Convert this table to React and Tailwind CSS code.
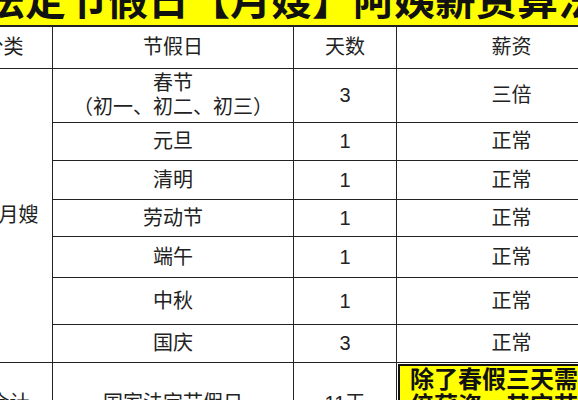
import React from "react";

const rows = [
  { name: "元旦", days: "1", pay: "正常", h: "h-[38px]" },
  { name: "清明", days: "1", pay: "正常", h: "h-[39px]" },
  { name: "劳动节", days: "1", pay: "正常", h: "h-[37px]" },
  { name: "端午", days: "1", pay: "正常", h: "h-[41px]" },
  { name: "中秋", days: "1", pay: "正常", h: "h-[47px]" },
  { name: "国庆", days: "3", pay: "正常", h: "h-[38px]" },
];

const cell = "border border-[#222] text-center align-middle p-0";

export default function App() {
  return (
    <div className="w-[578px] h-[400px] overflow-hidden bg-white text-[#222] font-['Liberation_Sans','Noto_Sans_CJK_SC',sans-serif]">
      {/* title band */}
      <div className="h-[27px] bg-[#ffff00] border-b-2 border-[#222] overflow-hidden">
        <div className="ml-[-16px] mt-[-19px] whitespace-nowrap text-[41px] leading-[41px] font-bold text-[#111]">
          法定节假日【月嫂】阿姨薪资算法
        </div>
      </div>

      <table className="table-fixed border-collapse ml-[-28px] w-[654px] text-[20px] leading-[24px]">
        <colgroup>
          <col className="w-[80px]" />
          <col className="w-[241px]" />
          <col className="w-[103px]" />
          <col className="w-[230px]" />
        </colgroup>
        <tbody>
          <tr className="h-[41px]">
            <td className={cell + " border-t-0 pr-[18px]"}>分类</td>
            <td className={cell + " border-t-0"}>节假日</td>
            <td className={cell + " border-t-0"}>天数</td>
            <td className={cell + " border-t-0"}>薪资</td>
          </tr>
          <tr className="h-[54px]">
            <td className={cell + " pr-[8px]"} rowSpan={7}>
              阿月嫂
            </td>
            <td className={cell}>
              <div>春节</div>
              <div>（初一、初二、初三）</div>
            </td>
            <td className={cell}>3</td>
            <td className={cell}>三倍</td>
          </tr>
          {rows.map((r) => (
            <tr key={r.name} className={r.h}>
              <td className={cell}>{r.name}</td>
              <td className={cell}>{r.days}</td>
              <td className={cell}>{r.pay}</td>
            </tr>
          ))}
          <tr className="h-[80px]">
            <td className={cell + " pr-[6px]"}>合计</td>
            <td className={cell}>国家法定节假日</td>
            <td className={cell}>11天</td>
            <td className="border border-[#222] p-0 align-top">
              <div className="h-[80px] mt-[1px] ml-[1px] border-2 border-[#111] bg-[#ffff00] pl-[10px] pt-[1px] text-left text-[24px] leading-[26px] font-bold text-[#111] whitespace-nowrap">
                <div>除了春假三天需三</div>
                <div>倍薪资，其它节假日正常</div>
              </div>
            </td>
          </tr>
        </tbody>
      </table>
    </div>
  );
}
